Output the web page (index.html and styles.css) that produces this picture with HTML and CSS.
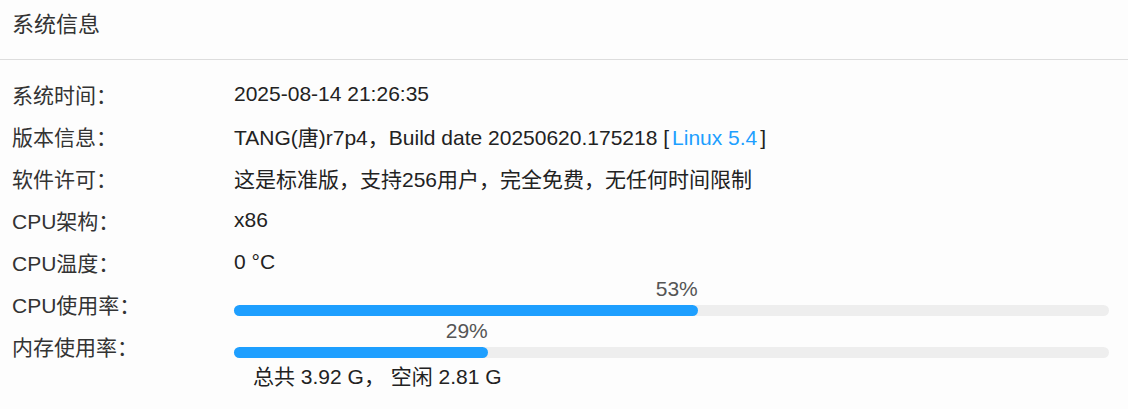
FILE: index.html
```html
<!DOCTYPE html>
<html lang="zh">
<head>
<meta charset="utf-8">
<title>系统信息</title>
<link rel="stylesheet" href="styles.css">
</head>
<body>
<div class="card">
  <div class="card-header">系统信息</div>
  <div class="card-body">
    <div class="row"><div class="label">系统时间：</div><div class="value">2025-08-14 21:26:35</div></div>
    <div class="row"><div class="label">版本信息：</div><div class="value">TANG(唐)r7p4，Build date 20250620.175218 [<a class="link" href="#">Linux 5.4</a>]</div></div>
    <div class="row"><div class="label">软件许可：</div><div class="value">这是标准版，支持256用户，完全免费，无任何时间限制</div></div>
    <div class="row"><div class="label">CPU架构：</div><div class="value">x86</div></div>
    <div class="row"><div class="label">CPU温度：</div><div class="value">0 °C</div></div>
    <div class="row"><div class="label">CPU使用率：</div>
      <div class="value progress-cell">
        <div class="progress"><div class="progress-bar" style="width:53%"><span class="progress-text">53%</span></div></div>
      </div>
    </div>
    <div class="row"><div class="label">内存使用率：</div>
      <div class="value progress-cell">
        <div class="progress"><div class="progress-bar" style="width:29%"><span class="progress-text">29%</span></div></div>
      </div>
    </div>
    <div class="mem-info">总共 3.92 G， 空闲 2.81 G</div>
  </div>
</div>
</body>
</html>
```
FILE: styles.css
```css
html, body {
  margin: 0;
  padding: 0;
  background: #fdfdfd;
}
body {
  font-family: "Liberation Sans", Arial, "Noto Sans CJK SC", sans-serif;
  font-size: 21px;
  color: #333;
}
.card-header {
  height: 59px;
  line-height: 50px;
  padding-left: 12px;
  border-bottom: 1px solid #ddd;
  color: #333;
  font-size: 22px;
}
.card-body {
  padding-top: 13px;
}
.row {
  display: flex;
  height: 42px;
  align-items: center;
}
.label {
  width: 222px;
  padding-left: 12px;
  color: #333;
}
.value {
  flex: 1;
  color: #222;
}
.link {
  color: #1e9fff;
  text-decoration: none;
  padding: 0 3px;
}
.progress-cell {
  align-self: flex-start;
  padding-top: 22px;
  padding-right: 19px;
}
.progress {
  height: 11px;
  border-radius: 6px;
  background: #eee;
}
.progress-bar {
  position: relative;
  height: 11px;
  border-radius: 6px;
  background: #1e9fff;
}
.progress-text {
  position: absolute;
  right: 0;
  bottom: 17px;
  line-height: 20px;
  color: #555;
}
.mem-info {
  padding-left: 253px;
  line-height: 20px;
  color: #222;
}
```
